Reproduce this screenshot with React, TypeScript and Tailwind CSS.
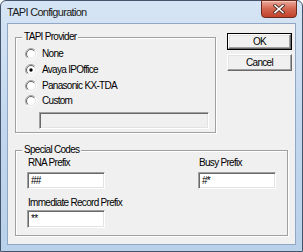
import React from "react";

const uiFont = "font-['Liberation_Sans',sans-serif] text-[10px] tracking-[-0.7px] text-black";

function Radio({ label, checked }: { label: string; checked?: boolean }) {
    return (
        <div className="flex items-center h-full">
            <svg width="12" height="12" viewBox="0 0 12 12" className="shrink-0">
                <circle cx="6" cy="6" r="5.5" fill="none" stroke="#ffffff" />
                <path d="M2.1 9.9 A5.5 5.5 0 0 1 9.9 2.1" fill="none" stroke="#a0a0a0" />
                <circle cx="6" cy="6" r="4.5" fill="#ffffff" stroke="#e3e3e3" />
                <path d="M2.8 9.2 A4.5 4.5 0 0 1 9.2 2.8" fill="none" stroke="#696969" />
                {checked && <circle cx="6" cy="6" r="1.7" fill="#000000" />}
            </svg>
            <span className="ml-[5px] leading-[12px]">{label}</span>
        </div>
    )
}

function TextBox({ value, disabled, className }: { value?: string; disabled?: boolean; className: string }) {
    return (
        <div className={`border border-t-[#a0a0a0] border-l-[#a0a0a0] border-r-white border-b-white shadow-[inset_1px_1px_0_#696969,inset_-1px_-1px_0_#e3e3e3] ${disabled ? "bg-[#f0f0f0]" : "bg-white"} pl-[3px] pt-[3px] leading-[10px] ${className}`}>
            {value}
        </div>
    )
}

function Button({ label, isDefault }: { label: string; isDefault?: boolean }) {
    return (
        <div className={`w-[65px] h-[17px] ${isDefault ? "border border-black" : ""}`}>
            <div className="h-full border border-t-white border-l-white border-r-[#696969] border-b-[#696969] shadow-[inset_-1px_-1px_0_#a0a0a0,inset_1px_1px_0_#e3e3e3] bg-[#f0f0f0] flex items-center justify-center leading-[12px]">
                {label}
            </div>
        </div>
    )
}

function GroupBox({ title, className, children }: { title: string; className: string; children: React.ReactNode }) {
    return (
        <div className={`relative border border-[#a0a0a0] shadow-[inset_1px_1px_0_#ffffff,1px_1px_0_#ffffff] ${className}`}>
            <span className="absolute left-[6px] -top-[7px] px-[2px] bg-[#f0f0f0] leading-[12px]">{title}</span>
            {children}
        </div>
    )
}

export default function App() {
    return (
        <div className="w-[303px] h-[252px] bg-white">
            <div className="h-full flex flex-col rounded-t-[6px] border border-[#44546a] bg-gradient-to-b from-[#d6e5f5] via-[#c2d7ee] to-[#b9d1ea] px-[6px] pb-[6px]">
                <div className="h-[22px] flex items-start shrink-0">
                    <span className="mt-[5px] font-['Liberation_Sans',sans-serif] text-[11px] leading-[12px] tracking-[-0.7px] text-[#1b1b1b]">TAPI Configuration</span>
                    <div className="ml-auto -mt-[1px] -mr-[1px] w-[36px] h-[18px] rounded-b-[4px] border border-[#6b2a1e] bg-gradient-to-b from-[#e9a899] via-[#d2654f] to-[#c2402a] shadow-[inset_0_1px_0_#f3c9bd] flex items-center justify-center">
                        <svg width="12" height="10" viewBox="0 0 12 10">
                            <path d="M2 1.5 L10 8.5 M10 1.5 L2 8.5" stroke="#4a2a24" strokeWidth="3.2" strokeLinecap="square" />
                            <path d="M2 1.5 L10 8.5 M10 1.5 L2 8.5" stroke="#ffffff" strokeWidth="1.6" strokeLinecap="square" />
                        </svg>
                    </div>
                </div>
                <div className={`flex-1 border border-[#8ea8c6] bg-[#f0f0f0] pl-[7px] ${uiFont}`}>
                    <div className="flex items-start">
                        <GroupBox title="TAPI Provider" className="mt-[13px] w-[201px] h-[96px]">
                            <div className="pl-[9px] pt-[8px]">
                                <div className="h-[16px]"><Radio label="None" /></div>
                                <div className="h-[16px]"><Radio label="Avaya IPOffice" checked /></div>
                                <div className="h-[16px]"><Radio label="Panasonic KX-TDA" /></div>
                                <div className="h-[14px]"><Radio label="Custom" /></div>
                            </div>
                            <TextBox disabled className="ml-[23px] mt-[4px] w-[170px] h-[17px]" />
                        </GroupBox>
                        <div className="ml-[11px] mt-[9px] flex flex-col gap-[4px]">
                            <Button label="OK" isDefault />
                            <Button label="Cancel" />
                        </div>
                    </div>
                    <GroupBox title="Special Codes" className="mt-[17px] w-[273px] h-[86px]">
                        <div className="pl-[11px] pt-[6px]">
                            <div className="flex">
                                <div className="w-[78px]">
                                    <div className="pl-[1px] h-[12px] leading-[12px]">RNA Prefix</div>
                                    <TextBox value="##" className="mt-[3px] w-[78px] h-[17px]" />
                                </div>
                                <div className="ml-[93px] w-[78px]">
                                    <div className="pl-[1px] h-[12px] leading-[12px]">Busy Prefix</div>
                                    <TextBox value="#*" className="mt-[3px] w-[78px] h-[17px]" />
                                </div>
                            </div>
                            <div className="mt-[8px] pl-[1px] h-[12px] leading-[12px]">Immediate Record Prefix</div>
                            <TextBox value="**" className="mt-[1px] w-[78px] h-[18px]" />
                        </div>
                    </GroupBox>
                </div>
            </div>
        </div>
    )
}
